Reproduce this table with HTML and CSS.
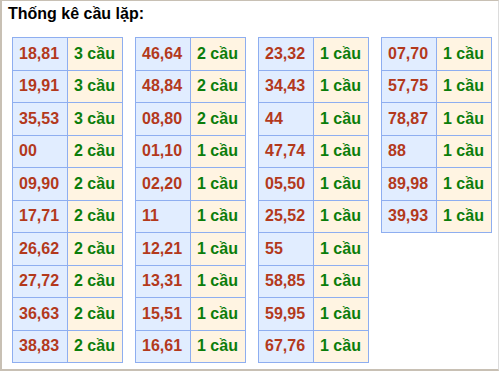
FILE: index.html
```html
<!DOCTYPE html>
<html>
<head>
<meta charset="utf-8">
<link rel="stylesheet" href="styles.css">
</head>
<body>
<div class="frame">
  <div class="title">Thống kê cầu lặp:</div>
  <div class="tables">
    <table class="t">
      <tr><td class="n">18,81</td><td class="c">3 cầu</td></tr>
      <tr><td class="n">19,91</td><td class="c">3 cầu</td></tr>
      <tr><td class="n">35,53</td><td class="c">3 cầu</td></tr>
      <tr><td class="n">00</td><td class="c">2 cầu</td></tr>
      <tr><td class="n">09,90</td><td class="c">2 cầu</td></tr>
      <tr><td class="n">17,71</td><td class="c">2 cầu</td></tr>
      <tr><td class="n">26,62</td><td class="c">2 cầu</td></tr>
      <tr><td class="n">27,72</td><td class="c">2 cầu</td></tr>
      <tr><td class="n">36,63</td><td class="c">2 cầu</td></tr>
      <tr><td class="n">38,83</td><td class="c">2 cầu</td></tr>
    </table>
    <table class="t">
      <tr><td class="n">46,64</td><td class="c">2 cầu</td></tr>
      <tr><td class="n">48,84</td><td class="c">2 cầu</td></tr>
      <tr><td class="n">08,80</td><td class="c">2 cầu</td></tr>
      <tr><td class="n">01,10</td><td class="c">1 cầu</td></tr>
      <tr><td class="n">02,20</td><td class="c">1 cầu</td></tr>
      <tr><td class="n">11</td><td class="c">1 cầu</td></tr>
      <tr><td class="n">12,21</td><td class="c">1 cầu</td></tr>
      <tr><td class="n">13,31</td><td class="c">1 cầu</td></tr>
      <tr><td class="n">15,51</td><td class="c">1 cầu</td></tr>
      <tr><td class="n">16,61</td><td class="c">1 cầu</td></tr>
    </table>
    <table class="t">
      <tr><td class="n">23,32</td><td class="c">1 cầu</td></tr>
      <tr><td class="n">34,43</td><td class="c">1 cầu</td></tr>
      <tr><td class="n">44</td><td class="c">1 cầu</td></tr>
      <tr><td class="n">47,74</td><td class="c">1 cầu</td></tr>
      <tr><td class="n">05,50</td><td class="c">1 cầu</td></tr>
      <tr><td class="n">25,52</td><td class="c">1 cầu</td></tr>
      <tr><td class="n">55</td><td class="c">1 cầu</td></tr>
      <tr><td class="n">58,85</td><td class="c">1 cầu</td></tr>
      <tr><td class="n">59,95</td><td class="c">1 cầu</td></tr>
      <tr><td class="n">67,76</td><td class="c">1 cầu</td></tr>
    </table>
    <table class="t">
      <tr><td class="n">07,70</td><td class="c">1 cầu</td></tr>
      <tr><td class="n">57,75</td><td class="c">1 cầu</td></tr>
      <tr><td class="n">78,87</td><td class="c">1 cầu</td></tr>
      <tr><td class="n">88</td><td class="c">1 cầu</td></tr>
      <tr><td class="n">89,98</td><td class="c">1 cầu</td></tr>
      <tr><td class="n">39,93</td><td class="c">1 cầu</td></tr>
    </table>
  </div>
</div>
</body>
</html>
```
FILE: styles.css
```css
html, body {
  margin: 0;
  padding: 0;
  background: #ffffff;
}
.frame {
  box-sizing: border-box;
  width: 499px;
  height: 371px;
  border-top: 1px solid #c8c0b4;
  border-left: 2px solid #c8c0b4;
  border-bottom: 2px solid #c8c0b4;
  border-right: 1px solid #dcdcdc;
  font-family: "Liberation Sans", Arial, sans-serif;
}
.title {
  font-weight: bold;
  font-size: 16px;
  line-height: 18px;
  color: #000;
  padding: 4px 0 0 6px;
  height: 32px;
  box-sizing: border-box;
}
.tables {
  display: flex;
  align-items: flex-start;
  gap: 12px;
  padding: 4px 0 0 10px;
}
.t {
  border-collapse: collapse;
  width: 111px;
  table-layout: fixed;
}
.t tr {
  height: 32.5px;
}
.t td {
  box-sizing: border-box;
  border: 1px solid #8eaef0;
  padding: 0 0 0 6px;
  font-weight: bold;
  font-size: 16px;
  white-space: nowrap;
}
.t td.n {
  width: 55px;
  background: #e1edff;
  color: #b3391c;
}
.t td.c {
  background: #fff4e2;
  color: #0b7d0b;
}
```
